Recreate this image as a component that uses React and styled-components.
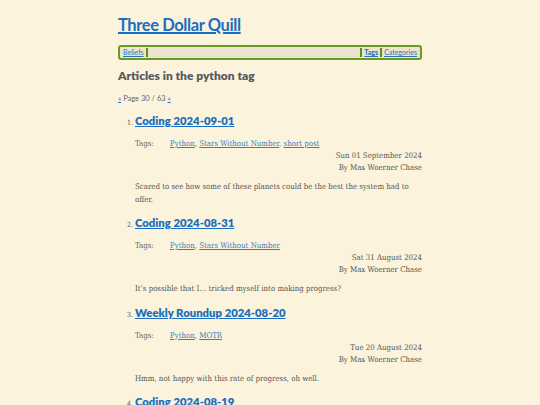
import React from "react";
import styled, { createGlobalStyle } from "styled-components";

const Global = createGlobalStyle`
  html, body { margin: 0; padding: 0; background: #fcf3dc; }
  body { font-family: "DejaVu Serif Condensed", "DejaVu Serif", serif; color: #555; }
`;

const Page = styled.div`
  width: 304px;
  margin: 0 auto;
  padding-top: 15px;
`;

const Title = styled.h1`
  margin: 0;
  font-family: "Lato", "Noto Sans", sans-serif;
  font-weight: 700;
  font-size: 16.5px;
  letter-spacing: -0.4px;
  line-height: 20px;
  a { color: #1b6fc0; text-decoration: underline; text-decoration-thickness: 1.5px; }
`;

const Nav = styled.nav`
  margin-top: 10px;
  height: 15px;
  box-sizing: border-box;
  border: 2px solid #6a9a22;
  border-radius: 3px;
  background: #ebe4cf;
  display: flex;
  align-items: stretch;
  font-family: "Lato", "Noto Sans", sans-serif;
  font-size: 7px;
  line-height: 11px;
  padding: 0 2px;
`;

const NavLink = styled.a`
  color: #2f74b4;
  text-decoration: underline;
  font-weight: ${(p) => (p.$bold ? 900 : 400)};
  padding: 0 1px;
`;

const Sep = styled.span`
  width: 2px;
  background: #5b8f1a;
  margin: 1px 1px;
`;

const Spacer = styled.span`
  flex: 1;
`;

const Heading = styled.h2`
  margin: 9px 0 0;
  font-family: "Lato", "Noto Sans", sans-serif;
  font-weight: 800;
  font-size: 12px;
  line-height: 14px;
  color: #555b60;
`;

const Pager = styled.p`
  margin: 11px 0 0;
  font-family: "Lato", "Noto Sans", sans-serif;
  font-size: 7.5px;
  line-height: 10px;
  color: #666;
  a { color: #2f74b4; }
`;

const List = styled.ol`
  margin: 0;
  padding-left: 17px;
  font-size: 7.8px;
`;

const Item = styled.li`
  margin-top: 9px;
  &::marker { color: #555; font-size: 7px; }
`;

const ItemTitle = styled.h3`
  margin: 0;
  font-family: "Lato", "Noto Sans", sans-serif;
  font-weight: 800;
  font-size: 11.3px;
  line-height: 16px;
  a { color: #1b6fc0; text-decoration: underline; }
`;

const TagRow = styled.div`
  margin-top: 9px;
  display: flex;
  line-height: 12px;
`;

const TagLabel = styled.span`
  width: 35px;
  color: #666;
`;

const TagLink = styled.a`
  color: #3d7dbd;
  text-decoration: underline;
`;

const Meta = styled.div`
  text-align: right;
  line-height: 12px;
  color: #555;
`;

const Summary = styled.p`
  margin: 7px 0 0;
  line-height: 12.5px;
  color: #555;
`;

const articles = [
  {
    title: "Coding 2024-09-01",
    tags: ["Python", "Stars Without Number", "short post"],
    date: "Sun 01 September 2024",
    summary: "Scared to see how some of these planets could be the best the system had to offer.",
  },
  {
    title: "Coding 2024-08-31",
    tags: ["Python", "Stars Without Number"],
    date: "Sat 31 August 2024",
    summary: "It’s possible that I… tricked myself into making progress?",
  },
  {
    title: "Weekly Roundup 2024-08-20",
    tags: ["Python", "MOTR"],
    date: "Tue 20 August 2024",
    summary: "Hmm, not happy with this rate of progress, oh well.",
  },
  {
    title: "Coding 2024-08-19",
    tags: ["Python"],
    date: "Mon 19 August 2024",
    summary: "",
  },
];

export default function App() {
  return (
    <>
      <Global />
      <Page>
        <Title><a href="#">Three Dollar Quill</a></Title>
        <Nav>
          <NavLink href="#">Beliefs</NavLink>
          <Sep />
          <Spacer />
          <Sep />
          <NavLink href="#" $bold>Tags</NavLink>
          <Sep />
          <NavLink href="#">Categories</NavLink>
        </Nav>
        <Heading>Articles in the python tag</Heading>
        <Pager><a href="#">«</a> Page 30 / 63 <a href="#">»</a></Pager>
        <List>
          {articles.map((a) => (
            <Item key={a.title}>
              <ItemTitle><a href="#">{a.title}</a></ItemTitle>
              <TagRow>
                <TagLabel>Tags:</TagLabel>
                <span>
                  {a.tags.map((t, i) => (
                    <React.Fragment key={t}>
                      {i > 0 && ", "}
                      <TagLink href="#">{t}</TagLink>
                    </React.Fragment>
                  ))}
                </span>
              </TagRow>
              <Meta>{a.date}</Meta>
              <Meta>By Max Woerner Chase</Meta>
              {a.summary && <Summary>{a.summary}</Summary>}
            </Item>
          ))}
        </List>
      </Page>
    </>
  );
}
